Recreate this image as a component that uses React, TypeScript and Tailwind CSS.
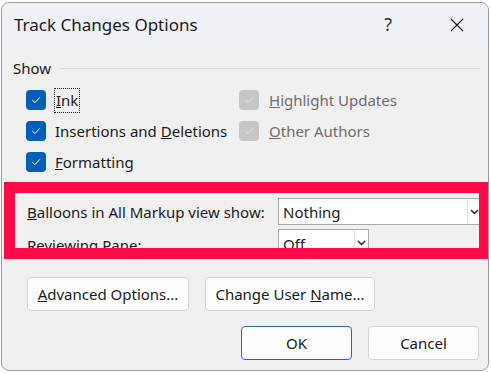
import React from "react";

const font = { fontFamily: '"Noto Sans", "Open Sans", sans-serif' };

function Check({ disabled }: { disabled?: boolean }) {
  return (
    <span
      className={
        "flex h-5 w-5 shrink-0 items-center justify-center rounded-[4px] " +
        (disabled ? "bg-[#c6c6c6]" : "bg-[#005fb8]")
      }
    >
      <svg width="12" height="12" viewBox="0 0 12 12" fill="none">
        <path
          d="M2.5 6.3 L5 8.6 L9.6 3.6"
          stroke={disabled ? "#e6e6e6" : "#ffffff"}
          strokeWidth="1"
          strokeLinecap="round"
          strokeLinejoin="round"
        />
      </svg>
    </span>
  );
}

function Chevron() {
  return (
    <svg width="9" height="6" viewBox="0 0 9 6" fill="none">
      <path d="M1 1 L4.5 4.5 L8 1" stroke="#222" strokeWidth="1.4" />
    </svg>
  );
}

function Btn({ children, def, className }: { children: React.ReactNode; def?: boolean; className?: string }) {
  return (
    <button
      className={
        "flex h-[34px] items-center justify-center rounded-[4px] bg-[#fdfdfd] text-[15px] leading-[20px] text-[#1a1a1a] " +
        (def ? "border border-[#2a6bb5] " : "border border-[#d4d4d4] ") +
        (className ?? "")
      }
    >
      {children}
    </button>
  );
}

export default function App() {
  return (
    <div className="h-[373px] w-[491px] overflow-hidden bg-white pl-px pt-[2px]" style={font}>
      <div className="flex h-[369px] w-[488px] flex-col overflow-hidden rounded-[8px] border border-[#9c9c9c] bg-[#f0f0f0]">
        {/* title bar */}
        <div className="flex h-[43px] shrink-0 items-center bg-[#eef2f7] pl-[12px] text-[17px] text-[#1b1b1b]">
          <span>Track Changes Options</span>
          <span className="ml-auto mr-[58px] text-[18px] text-[#333]">?</span>
          <svg className="mr-[24px]" width="14" height="14" viewBox="0 0 14 14" fill="none">
            <path d="M1 1 L13 13 M13 1 L1 13" stroke="#1b1b1b" strokeWidth="1.2" />
          </svg>
        </div>

        <div className="relative flex-1 text-[15px] leading-[20px] text-[#1b1b1b]">
          {/* Show group */}
          <div className="mt-[12px] flex h-[20px] items-center pl-[11px]">
            <span>Show</span>
            <div className="ml-[9px] mr-[8px] h-px flex-1 bg-[#d9d9d9]" />
          </div>

          <div className="mt-[12px] grid grid-cols-[213px_1fr] auto-rows-[20px] gap-y-[11px] pl-[24px]">
            <div className="flex items-center gap-[8px]">
              <Check />
              <span className="border border-dotted border-[#222] px-px leading-[23px]">
                <u>I</u>nk
              </span>
            </div>
            <div className="flex items-center gap-[10px] text-[#6d6d6d]">
              <Check disabled />
              <span>
                <u>H</u>ighlight Updates
              </span>
            </div>
            <div className="flex items-center gap-[9px]">
              <Check />
              <span>
                Insertions and <u>D</u>eletions
              </span>
            </div>
            <div className="flex items-center gap-[10px] text-[#6d6d6d]">
              <Check disabled />
              <span>
                <u>O</u>ther Authors
              </span>
            </div>
            <div className="flex items-center gap-[9px]">
              <Check />
              <span>
                <u>F</u>ormatting
              </span>
            </div>
          </div>

          {/* balloons / reviewing pane */}
          <div className="mt-[26px] flex h-[27px] items-center pl-[25px]">
            <span className="w-[251px]">
              <u>B</u>alloons in All Markup view show:
            </span>
            <div className="flex h-[27px] w-[204px] items-center border border-[#a9a9a9] bg-white">
              <span className="flex-1 pl-[4px]">Nothing</span>
              <span className="flex h-full w-[14px] items-center justify-center border-l border-[#e0e0e0]">
                <Chevron />
              </span>
            </div>
          </div>
          <div className="mt-[4px] flex h-[27px] items-center pl-[25px]">
            <span className="w-[251px] pt-[4px]">
              Reviewing <u>P</u>ane:
            </span>
            <div className="flex h-[27px] w-[91px] items-center border border-[#a9a9a9] bg-white">
              <span className="flex-1 pl-[4px] pt-[3px]">Off</span>
              <span className="flex h-full w-[14px] items-center justify-center border-l border-[#e0e0e0]">
                <Chevron />
              </span>
            </div>
          </div>

          {/* red highlight annotation */}
          <div className="absolute left-[2px] top-[136px] h-[77px] w-[486px] border-[11px] border-[#ff0a47]" />

          {/* buttons */}
          <div className="mt-[21px] flex gap-[16px] pl-[25px]">
            <Btn className="w-[162px]">
              <span>
                <u>A</u>dvanced Options...
              </span>
            </Btn>
            <Btn className="w-[170px]">
              <span>
                Change User <u>N</u>ame...
              </span>
            </Btn>
          </div>
          <div className="mt-[15px] flex justify-end gap-[16px] pr-[9px]">
            <Btn def className="w-[111px]">
              OK
            </Btn>
            <Btn className="w-[111px]">Cancel</Btn>
          </div>
        </div>
      </div>
    </div>
  );
}
